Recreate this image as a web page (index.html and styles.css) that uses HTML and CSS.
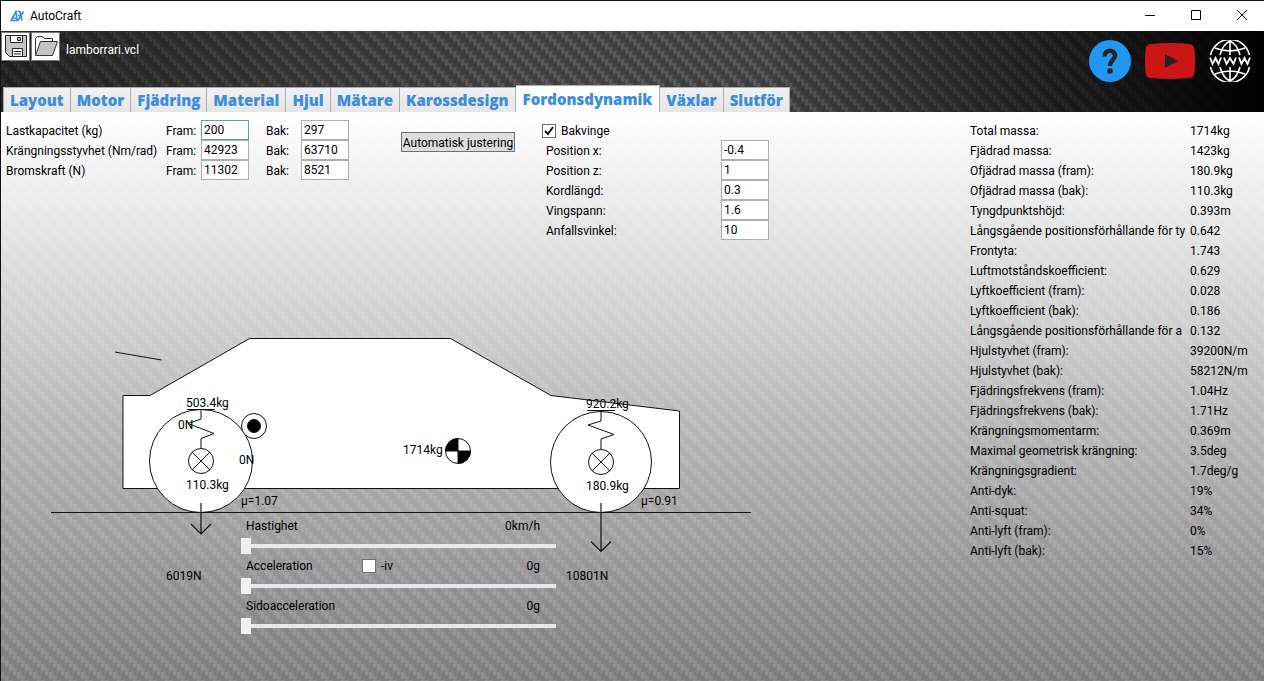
FILE: index.html
```html
<!DOCTYPE html>
<html lang="sv">
<head>
<meta charset="utf-8">
<title>AutoCraft</title>
<link rel="stylesheet" href="styles.css">
</head>
<body>
<div class="window">
  <header class="titlebar">
    <svg class="app-icon" width="14" height="12" viewBox="0 0 14 12" fill="none" stroke="#3b8de0" stroke-width="1.6"><path d="M1 10.500L6 1.500L7 10.500ZM3 8H7M7.500 1.500H10L12 10.500M13.500 1.500L8 10.500M8 5.500H11"/></svg>
    <h1 class="title">AutoCraft</h1>
    <div class="window-buttons">
      <button class="window-button" type="button" aria-label="Minimera"><svg width="12" height="12" viewBox="0 0 12 12"><path d="M1 5.500H11"/></svg></button>
      <button class="window-button" type="button" aria-label="Maximera"><svg width="12" height="12" viewBox="0 0 12 12"><path d="M1.500 .5H10.500V9.500H1.500Z"/></svg></button>
      <button class="window-button" type="button" aria-label="Stäng"><svg width="12" height="12" viewBox="0 0 12 12"><path d="M1 0L11 10M11 0L1 10"/></svg></button>
    </div>
  </header>

  <div class="banner">
    <div class="banner-left">
      <div class="file-bar">
        <button class="file-button" type="button" aria-label="Spara"><svg width="24" height="24" viewBox="0 0 24 24" stroke="#222" fill="#c4c4c4"><path d="M1.500 1.500H22.500V22.500H5.500L1.500 18.500Z"/><path d="M6.500 1.500H18.500V8.500H6.500Z" fill="#fff"/><path d="M13.500 3.500H16.500V6.500H13.500Z"/><path d="M8.500 14.500H18.500V22.500H8.500Z" fill="#fff"/><path d="M10 17.500H17M10 20H17"/></svg></button>
        <button class="file-button" type="button" aria-label="Öppna"><svg width="24" height="24" viewBox="0 0 24 24" stroke="#333" fill="#fff"><path d="M1.500 20.500V4.500L3.500 2.500H8.500L10.500 4.500H18.500V8"/><path d="M6.500 7.500H23.500L18.500 21.500H1.500Z" fill="#c4c4c4"/></svg></button>
        <span class="file-name">lamborrari.vcl</span>
      </div>
      <nav class="tabs" role="tablist">
        <button class="tab" role="tab" type="button">Layout</button>
        <button class="tab" role="tab" type="button">Motor</button>
        <button class="tab" role="tab" type="button">Fjädring</button>
        <button class="tab" role="tab" type="button">Material</button>
        <button class="tab" role="tab" type="button">Hjul</button>
        <button class="tab" role="tab" type="button">Mätare</button>
        <button class="tab" role="tab" type="button">Karossdesign</button>
        <button class="tab tab-active" role="tab" type="button" aria-selected="true">Fordonsdynamik</button>
        <button class="tab" role="tab" type="button">Växlar</button>
        <button class="tab" role="tab" type="button">Slutför</button>
      </nav>
    </div>
    <div class="links">
      <a href="#help" aria-label="Hjälp"><svg width="42" height="42" viewBox="0 0 42 42"><circle cx="21" cy="21" r="21" fill="#2196f3"/><path d="M15.500 16.500C15.500 8.500 26 9.500 26 15.500C26 20 21 20 21 26" fill="none" stroke="#222" stroke-width="4.500"/><circle cx="21" cy="31" r="2.800" fill="#222"/></svg></a>
      <a href="#video" aria-label="Video"><svg width="50" height="36" viewBox="0 0 50 36"><path d="M6 1Q25-1 44 1Q49 1 49.500 7Q50.500 18 49.500 29Q49 35 44 35Q25 37 6 35Q1 35 .5 29Q-.5 18 .5 7Q1 1 6 1Z" fill="#cc1515"/><path d="M20 11L33 18L20 25Z" fill="#222"/></svg></a>
      <a href="#web" aria-label="Webbplats"><svg width="42" height="42" viewBox="0 0 42 42" fill="none" stroke="#fff" stroke-width="1.600"><path d="M1.500 15A20 20 0 0 1 40.500 15M1.500 27A20 20 0 0 0 40.500 27M11 15Q14 4 21 1Q28 4 31 15M11 27Q14 38 21 41Q28 38 31 27M21 1V15M21 27V41M6 8Q21 14 36 8M6 34Q21 28 36 34"/><path d="M1 17.500L3.500 24L6.500 18L9.500 24L12 17.500M15 17.500L17.500 24L21 18L24.500 24L27 17.500M30 17.500L32.500 24L35.500 18L38.500 24L41 17.500" stroke-width="1.800"/></svg></a>
    </div>
  </div>

  <main class="page">
    <div class="work">
      <div class="forms">
        <form class="loads">
          <span>Lastkapacitet (kg)</span><label for="lf">Fram:</label><input class="box box-focus" id="lf" value="200"><label class="rear" for="lb">Bak:</label><input class="box" id="lb" value="297">
          <span>Krängningsstyvhet (Nm/rad)</span><label for="kf">Fram:</label><input class="box" id="kf" value="42923"><label class="rear" for="kb">Bak:</label><input class="box" id="kb" value="63710">
          <span>Bromskraft (N)</span><label for="bf">Fram:</label><input class="box" id="bf" value="11302"><label class="rear" for="bb">Bak:</label><input class="box" id="bb" value="8521">
        </form>
        <button class="auto" type="button">Automatisk justering</button>
        <form class="wing">
          <label class="check wing-check"><input type="checkbox" checked>Bakvinge</label>
          <label for="px">Position x:</label><input class="box" id="px" value="-0.4">
          <label for="pz">Position z:</label><input class="box" id="pz" value="1">
          <label for="ko">Kordlängd:</label><input class="box" id="ko" value="0.3">
          <label for="vi">Vingspann:</label><input class="box" id="vi" value="1.6">
          <label for="an">Anfallsvinkel:</label><input class="box" id="an" value="10">
        </form>
      </div>

      <div class="scene">
        <svg class="car" width="770" height="270" viewBox="0 320 770 270">
          <g class="line">
            <path class="solid" d="M123 395.500H150L249.500 338.500H450.500L551 395.500L679.500 411V488.500H123Z"/>
            <path d="M115 352L161.500 360"/>
            <circle class="solid" cx="201" cy="461" r="51.500"/>
            <circle class="solid" cx="601" cy="462" r="50.500"/>
            <path d="M187 409.500H215M201 409V419L188 423.500L214 433.500L201 438.500V448"/>
            <path d="M587 410.500H615M601 411V421L588 425L614 434.500L601 439V449"/>
            <circle cx="201" cy="461" r="12.500"/><path d="M192 452L210 470M210 452L192 470"/>
            <circle cx="601" cy="462" r="12.500"/><path d="M592 453L610 471M610 453L592 471"/>
            <circle class="solid" cx="254" cy="426" r="12.500"/><circle class="ink" cx="254" cy="426" r="6.500"/>
            <circle class="solid" cx="458" cy="451" r="12.500"/>
            <path class="ink" d="M458 451H445.500A12.500 12.500 0 0 1 458 438.500ZM458 451H470.500A12.500 12.500 0 0 1 458 463.500Z"/>
            <path d="M51 512.500H751"/>
            <path d="M201 503V534M191 524L201 534L211 524M601 503V551.500M591 541.500L601 551.500L611 541.500" stroke-width="1.200"/>
          </g>
          <g class="caption">
            <text x="186" y="407">503.4kg</text><text x="178" y="429">0N</text><text x="239" y="464">0N</text>
            <text x="186" y="489">110.3kg</text><text x="403" y="454">1714kg</text><text x="586" y="408">920.2kg</text>
            <text x="586" y="490">180.9kg</text><text x="241" y="505">µ=1.07</text><text x="641" y="505">µ=0.91</text>
            <text x="166" y="580">6019N</text><text x="566" y="580">10801N</text>
          </g>
        </svg>
        <form class="sliders">
          <div class="slider-head"><label for="speed">Hastighet</label><output>0km/h</output></div>
          <input class="slider" id="speed" type="range" value="0">
          <div class="slider-head"><label for="acc">Acceleration</label><label class="check"><input type="checkbox">-iv</label><output>0g</output></div>
          <input class="slider" id="acc" type="range" value="0">
          <div class="slider-head"><label for="side">Sidoacceleration</label><output>0g</output></div>
          <input class="slider" id="side" type="range" value="0">
        </form>
      </div>
    </div>

    <table class="stats">
      <tr><th scope="row">Total massa:</th><td>1714kg</td></tr>
      <tr><th scope="row">Fjädrad massa:</th><td>1423kg</td></tr>
      <tr><th scope="row">Ofjädrad massa (fram):</th><td>180.9kg</td></tr>
      <tr><th scope="row">Ofjädrad massa (bak):</th><td>110.3kg</td></tr>
      <tr><th scope="row">Tyngdpunktshöjd:</th><td>0.393m</td></tr>
      <tr><th scope="row">Långsgående positionsförhållande för ty</th><td>0.642</td></tr>
      <tr><th scope="row">Frontyta:</th><td>1.743</td></tr>
      <tr><th scope="row">Luftmotståndskoefficient:</th><td>0.629</td></tr>
      <tr><th scope="row">Lyftkoefficient (fram):</th><td>0.028</td></tr>
      <tr><th scope="row">Lyftkoefficient (bak):</th><td>0.186</td></tr>
      <tr><th scope="row">Långsgående positionsförhållande för a</th><td>0.132</td></tr>
      <tr><th scope="row">Hjulstyvhet (fram):</th><td>39200N/m</td></tr>
      <tr><th scope="row">Hjulstyvhet (bak):</th><td>58212N/m</td></tr>
      <tr><th scope="row">Fjädringsfrekvens (fram):</th><td>1.04Hz</td></tr>
      <tr><th scope="row">Fjädringsfrekvens (bak):</th><td>1.71Hz</td></tr>
      <tr><th scope="row">Krängningsmomentarm:</th><td>0.369m</td></tr>
      <tr><th scope="row">Maximal geometrisk krängning:</th><td>3.5deg</td></tr>
      <tr><th scope="row">Krängningsgradient:</th><td>1.7deg/g</td></tr>
      <tr><th scope="row">Anti-dyk:</th><td>19%</td></tr>
      <tr><th scope="row">Anti-squat:</th><td>34%</td></tr>
      <tr><th scope="row">Anti-lyft (fram):</th><td>0%</td></tr>
      <tr><th scope="row">Anti-lyft (bak):</th><td>15%</td></tr>
    </table>
  </main>
</div>
</body>
</html>
```

FILE: styles.css
```css
:root {
  --weave: url("data:image/svg+xml,%3Csvg xmlns='http://www.w3.org/2000/svg' width='16' height='16'%3E%3Cg fill='%23fff' fill-opacity='.12'%3E%3Cpath d='M0 0h4v7H0zM4 4h4v7H4zM8 8h4v7H8zM12 12h4v4h-4zM12 0h4v3h-4z'/%3E%3C/g%3E%3Cg fill='%23000' fill-opacity='.12'%3E%3Cpath d='M0 10h4v1H0zM4 14h4v1H4zM8 2h4v1H8zM12 6h4v1h-4zM3 0h1v7H3zM7 4h1v7H7zM11 8h1v7h-1zM15 12h1v4h-1zM15 0h1v3h-1z'/%3E%3C/g%3E%3C/svg%3E");
}

* { box-sizing: border-box; }

body {
  margin: 0;
  font: 12px/20px Roboto, "Open Sans", sans-serif;
  color: #000;
}

button, input { font: inherit; color: inherit; }

.window {
  min-height: 100vh;
  display: flex;
  flex-direction: column;
  border-top: 1px solid #111;
  border-left: 1px solid #111;
}

.titlebar {
  display: flex;
  align-items: center;
  height: 30px;
  padding-left: 9px;
  gap: 6px;
  background: #fff;
}

.title { margin: 0; font-size: 12px; font-weight: 400; }
.window-buttons { display: flex; margin: 0 -1px 0 auto; }
.window-button {
  display: grid;
  place-items: center;
  width: 46px;
  height: 30px;
  padding: 0;
  border: 0;
  background: none;
}
.window-button svg { fill: none; stroke: #000; }

.banner {
  display: flex;
  justify-content: space-between;
  background:
    linear-gradient(90deg, rgba(0,0,0,.5), rgba(0,0,0,0) 40%, rgba(0,0,0,0) 60%, rgba(0,0,0,.6) 85%, #000),
    var(--weave) #404040;
}

.file-bar { display: flex; align-items: center; gap: 1px; height: 30px; }
.file-button {
  display: grid;
  place-items: center;
  width: 29px;
  height: 29px;
  padding: 0;
  border: 1px solid #777;
  background: #fff;
}
.file-name { padding: 8px 0 0 5px; color: #fff; }

.tabs { display: flex; align-items: flex-end; padding: 24px 0 0 2px; }
.tab {
  height: 25px;
  padding: 0 6px;
  border: 1px solid #acacac;
  border-bottom: 0;
  background: linear-gradient(#f0f0f0, #e6e6e6);
  color: #3b8de0;
  font-family: "Open Sans", sans-serif;
  font-size: 15px;
  font-weight: 800;
  white-space: nowrap;
}
.tab + .tab { border-left-width: 0; }
.tab-active { height: 27px; padding: 0 7px; background: #fff; }

.links { display: flex; align-items: center; gap: 14px; padding: 0 13px 22px 0; }
.links a, .links svg { display: block; }

.page {
  flex: 1;
  display: flex;
  justify-content: space-between;
  padding-top: 8px;
  background:
    linear-gradient(#fff, rgba(255,255,255,.32)),
    var(--weave) #404040;
}

.forms { display: flex; align-items: flex-start; }
.loads {
  display: grid;
  grid-template-columns: 160px 35px 48px 52px 48px;
  grid-auto-rows: 20px;
  padding-left: 5px;
  line-height: 22px;
  white-space: nowrap;
}
.rear { padding-left: 17px; }

.box {
  display: block;
  width: 48px;
  height: 20px;
  padding: 0 2px 1px;
  border: 1px solid #abadb3;
  background: #fff;
  line-height: 16px;
  outline: 0;
}
.box-focus { border-color: #569de5; }

.auto {
  width: 114px;
  height: 20px;
  margin: 12px 26px 0 52px;
  padding: 0;
  border: 1px solid #707070;
  background: #ddd;
  line-height: 20px;
  white-space: nowrap;
}

.wing {
  display: grid;
  grid-template-columns: 175px 48px;
  grid-auto-rows: 20px;
  padding-left: 5px;
  line-height: 22px;
}
.check { display: flex; align-items: center; gap: 5px; }
.wing-check { grid-column: 1 / -1; height: 22px; margin-left: -4px; }
.check input {
  appearance: none;
  width: 14px;
  height: 14px;
  margin: 0;
  border: 1px solid #707070;
  background: #fff;
}
.check input:checked {
  background: #fff url("data:image/svg+xml,%3Csvg xmlns='http://www.w3.org/2000/svg' viewBox='0 0 12 12'%3E%3Cpath d='M2 6l3 3 5-7' fill='none' stroke='%23111' stroke-width='2'/%3E%3C/svg%3E");
}

.scene { display: grid; margin-top: 80px; }
.scene > * { grid-area: 1 / 1; }
.car { display: block; margin-left: -1px; }
.line { fill: none; stroke: #111; }
.line .solid { fill: #fff; }
.line .ink { fill: #000; }

.sliders { width: 315px; margin: 196px 0 0 240px; }
.slider-head {
  position: relative;
  display: flex;
  justify-content: space-between;
  padding: 0 16px 0 5px;
}
.slider-head .check { position: absolute; left: 121px; }
.slider {
  appearance: none;
  display: block;
  width: 315px;
  height: 20px;
  margin: 0;
  background: linear-gradient(#e7eaea, #e7eaea) center / 100% 4px no-repeat;
}
.slider::-webkit-slider-thumb {
  appearance: none;
  width: 10px;
  height: 16px;
  background: #f0f0f0;
}

.stats {
  width: 294px;
  margin-top: 1px;
  table-layout: fixed;
  border-spacing: 0;
  align-self: flex-start;
}
.stats th, .stats td { height: 20px; padding: 0; text-align: left; font-weight: 400; white-space: nowrap; }
.stats th { width: 220px; }
```
